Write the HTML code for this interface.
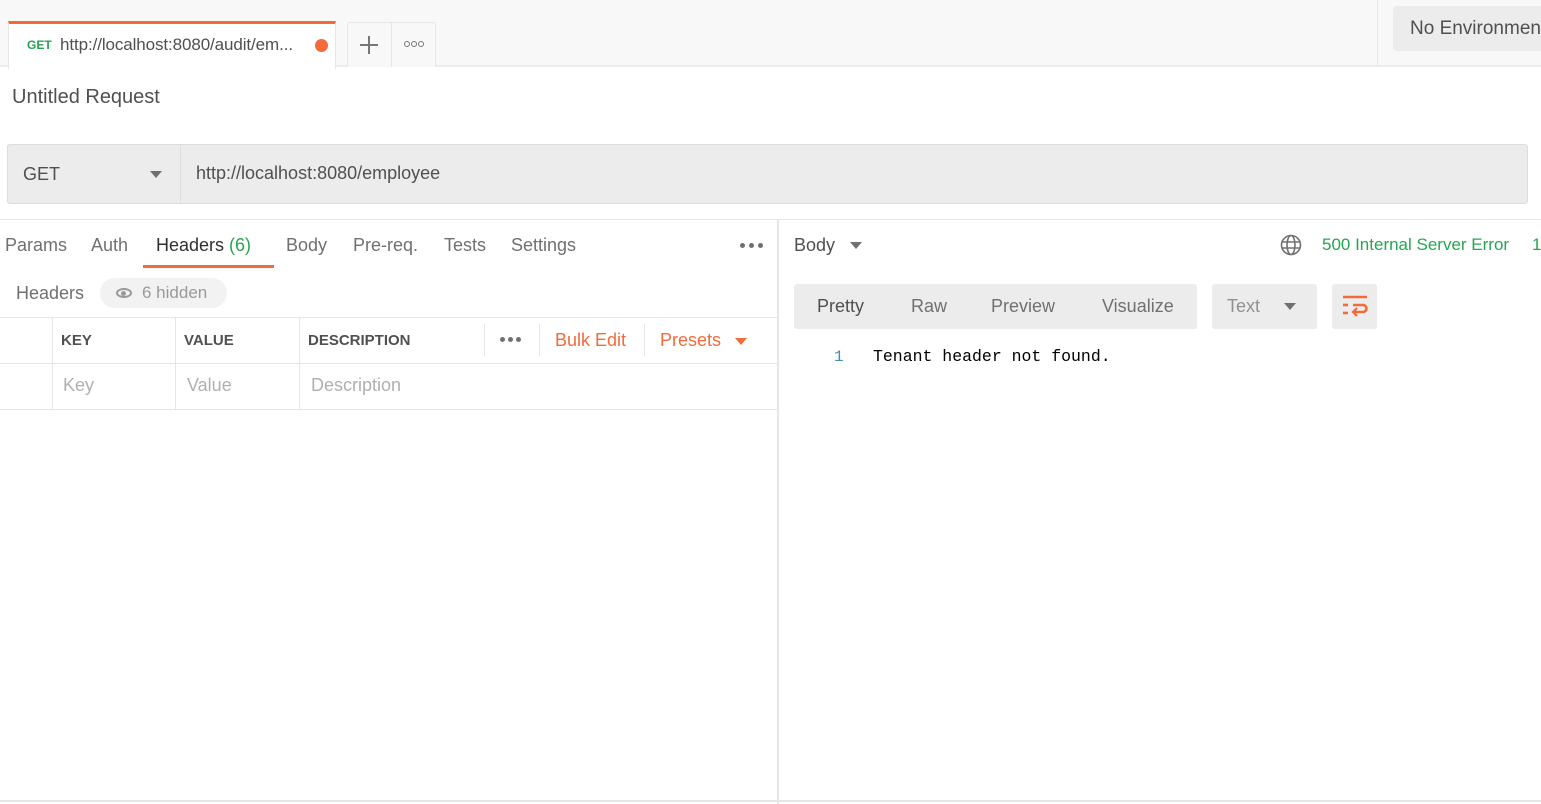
<!DOCTYPE html>
<html><head><style>
*{box-sizing:border-box;margin:0;padding:0}
body{width:1541px;height:804px;overflow:hidden;background:#fff;font-family:"Liberation Sans",sans-serif;color:#505050;position:relative}
.a{position:absolute;white-space:nowrap}
.d{position:absolute;width:5px;height:5px;border-radius:50%;background:#707070}
.o{position:absolute;width:6px;height:6px;border-radius:50%;border:1.3px solid #777}
</style></head><body>
<div class="a" style="left:0;top:0;width:1541px;height:67px;background:#f8f8f8;border-bottom:2px solid #ececec"></div>
<div class="a" style="left:1377px;top:0;width:1px;height:66px;background:#e6e6e6"></div>
<div class="a" style="left:8px;top:21px;width:328px;height:48px;background:#fff;border-top:3px solid #f26b3a;border-left:1px solid #e6e6e6;border-right:1px solid #e6e6e6"></div>
<div class="a" style="left:27px;top:38px;font-size:12px;font-weight:bold;color:#26a551">GET</div>
<div class="a" style="left:60px;top:35px;font-size:17px;color:#505050;letter-spacing:-0.1px">http://localhost:8080/audit/em...</div>
<div class="a" style="left:315px;top:39px;width:13px;height:13px;border-radius:50%;background:#f26b3a"></div>
<div class="a" style="left:347px;top:22px;width:89px;height:45px;border:1px solid #e6e6e6;border-bottom:none;border-radius:3px 3px 0 0;background:#f8f8f8"></div>
<div class="a" style="left:391px;top:23px;width:1px;height:44px;background:#e6e6e6"></div>
<div class="a" style="left:360px;top:44px;width:18px;height:1.6px;background:#777"></div>
<div class="a" style="left:368.2px;top:36px;width:1.6px;height:18px;background:#777"></div>
<div class="o" style="left:404px;top:41px"></div><div class="o" style="left:411px;top:41px"></div><div class="o" style="left:418px;top:41px"></div>
<div class="a" style="left:1393px;top:6px;width:160px;height:45px;background:#ececec;border-radius:4px"></div>
<div class="a" style="left:1410px;top:18px;font-size:19px;color:#505050">No Environment</div>
<div class="a" style="left:12px;top:86px;font-size:20px;color:#505050">Untitled Request</div>
<div class="a" style="left:7px;top:144px;width:1521px;height:60px;background:#ececec;border:1px solid #ddd;border-radius:3px"></div>
<div class="a" style="left:180px;top:145px;width:1px;height:58px;background:#ddd"></div>
<div class="a" style="left:23px;top:164px;font-size:18px;color:#505050">GET</div>
<div class="a" style="left:150px;top:171px;width:0;height:0;border-left:6px solid transparent;border-right:6px solid transparent;border-top:7px solid #707070"></div>
<div class="a" style="left:196px;top:163px;font-size:18px;color:#505050">http://localhost:8080/employee</div>
<div class="a" style="left:0;top:219px;width:1541px;height:1px;background:#e6e6e6"></div>
<div class="a" style="left:777px;top:220px;width:2px;height:584px;background:#e6e6e6"></div>
<div class="a" style="left:0;top:800px;width:1541px;height:2px;background:#e6e6e6"></div>
<div class="a" style="left:5px;top:235px;font-size:18px;color:#707070">Params</div>
<div class="a" style="left:91px;top:235px;font-size:18px;color:#707070">Auth</div>
<div class="a" style="left:156px;top:235px;font-size:18px;color:#303030">Headers <span style="color:#26a551">(6)</span></div>
<div class="a" style="left:143px;top:265px;width:131px;height:3px;background:#f26b3a"></div>
<div class="a" style="left:286px;top:235px;font-size:18px;color:#707070">Body</div>
<div class="a" style="left:353px;top:235px;font-size:18px;color:#707070">Pre-req.</div>
<div class="a" style="left:444px;top:235px;font-size:18px;color:#707070">Tests</div>
<div class="a" style="left:511px;top:235px;font-size:18px;color:#707070">Settings</div>
<div class="d" style="left:740px;top:243px"></div><div class="d" style="left:749px;top:243px"></div><div class="d" style="left:758px;top:243px"></div>
<div class="a" style="left:16px;top:283px;font-size:18px;color:#707070">Headers</div>
<div class="a" style="left:100px;top:278px;width:127px;height:30px;background:#f2f2f2;border-radius:15px"></div>
<div class="a" style="left:116px;top:288px;width:16px;height:10px;border:2px solid #999;border-radius:50%"></div>
<div class="a" style="left:121px;top:291px;width:5px;height:5px;background:#999;border-radius:50%"></div>
<div class="a" style="left:142px;top:283px;font-size:17px;color:#999">6 hidden</div>
<div class="a" style="left:0;top:317px;width:777px;height:1px;background:#e6e6e6"></div>
<div class="a" style="left:0;top:363px;width:777px;height:1px;background:#e6e6e6"></div>
<div class="a" style="left:0;top:409px;width:777px;height:1px;background:#e6e6e6"></div>
<div class="a" style="left:52px;top:318px;width:1px;height:91px;background:#e6e6e6"></div>
<div class="a" style="left:175px;top:318px;width:1px;height:91px;background:#e6e6e6"></div>
<div class="a" style="left:299px;top:318px;width:1px;height:91px;background:#e6e6e6"></div>
<div class="a" style="left:484px;top:324px;width:1px;height:32px;background:#e6e6e6"></div>
<div class="a" style="left:539px;top:324px;width:1px;height:32px;background:#e6e6e6"></div>
<div class="a" style="left:644px;top:324px;width:1px;height:32px;background:#e6e6e6"></div>
<div class="a" style="left:61px;top:332px;font-size:15px;font-weight:bold;color:#505050">KEY</div>
<div class="a" style="left:184px;top:332px;font-size:15px;font-weight:bold;color:#505050">VALUE</div>
<div class="a" style="left:308px;top:332px;font-size:15px;font-weight:bold;color:#505050">DESCRIPTION</div>
<div class="d" style="left:500px;top:337px"></div><div class="d" style="left:508px;top:337px"></div><div class="d" style="left:516px;top:337px"></div>
<div class="a" style="left:555px;top:330px;font-size:18px;color:#f26b3a">Bulk Edit</div>
<div class="a" style="left:660px;top:330px;font-size:18px;color:#f26b3a">Presets</div>
<div class="a" style="left:735px;top:338px;width:0;height:0;border-left:6px solid transparent;border-right:6px solid transparent;border-top:7px solid #f26b3a"></div>
<div class="a" style="left:63px;top:375px;font-size:18px;color:#b0b0b0">Key</div>
<div class="a" style="left:187px;top:375px;font-size:18px;color:#b0b0b0">Value</div>
<div class="a" style="left:311px;top:375px;font-size:18px;color:#b0b0b0">Description</div>
<div class="a" style="left:794px;top:235px;font-size:18px;color:#505050">Body</div>
<div class="a" style="left:850px;top:242px;width:0;height:0;border-left:6px solid transparent;border-right:6px solid transparent;border-top:7px solid #707070"></div>
<svg class="a" style="left:1280px;top:234px" width="22" height="22" viewBox="0 0 22 22" fill="none" stroke="#707070" stroke-width="1.6"><circle cx="11" cy="11" r="9.5"/><ellipse cx="11" cy="11" rx="4" ry="9.5"/><line x1="2" y1="8" x2="20" y2="8"/><line x1="2" y1="14" x2="20" y2="14"/></svg>
<div class="a" style="left:1322px;top:235px;font-size:17px;color:#26a551">500 Internal Server Error</div>
<div class="a" style="left:1532px;top:235px;font-size:17px;color:#26a551">1</div>
<div class="a" style="left:794px;top:284px;width:403px;height:45px;background:#ececec;border-radius:3px"></div>
<div class="a" style="left:817px;top:296px;font-size:18px;color:#505050">Pretty</div>
<div class="a" style="left:911px;top:296px;font-size:18px;color:#707070">Raw</div>
<div class="a" style="left:991px;top:296px;font-size:18px;color:#707070">Preview</div>
<div class="a" style="left:1102px;top:296px;font-size:18px;color:#707070">Visualize</div>
<div class="a" style="left:1212px;top:284px;width:105px;height:45px;background:#ececec;border-radius:3px"></div>
<div class="a" style="left:1227px;top:296px;font-size:18px;color:#909090">Text</div>
<div class="a" style="left:1284px;top:303px;width:0;height:0;border-left:6px solid transparent;border-right:6px solid transparent;border-top:7px solid #707070"></div>
<div class="a" style="left:1332px;top:284px;width:45px;height:45px;background:#ececec;border-radius:3px"></div>
<svg class="a" style="left:1342px;top:294px" width="26" height="24" viewBox="0 0 26 24" fill="none" stroke="#f26b3a" stroke-width="2.6"><line x1="1" y1="3" x2="25" y2="3"/><line x1="1" y1="11" x2="6" y2="11"/><path d="M11 11h10a3.5 3.5 0 0 1 0 7h-9"/><path d="M15 14l-4 4 4 4" stroke-width="2.2"/><line x1="1" y1="19" x2="6" y2="19"/></svg>
<div class="a" style="left:834px;top:348px;font-family:'Liberation Mono',monospace;font-size:16px;color:#4a8bb5">1</div>
<div class="a" style="left:873px;top:347px;font-family:'Liberation Mono',monospace;font-size:16.5px;color:#000">Tenant header not found.</div>
</body></html>
